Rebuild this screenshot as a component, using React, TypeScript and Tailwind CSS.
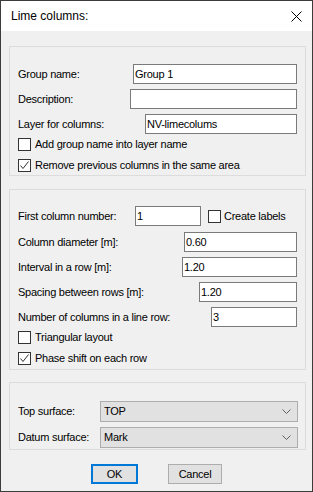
import React from "react";

const font = { fontFamily: '"Liberation Sans", Arial, sans-serif' };

function TextBox(props: { value: string; width: string }) {
  return (
    <div
      className={`ml-auto h-[20px] ${props.width} border border-[#7a7a7a] bg-white pl-[1px] flex items-center text-[11px] text-black`}
    >
      {props.value}
    </div>
  );
}

function Check(props: { checked?: boolean }) {
  return (
    <div className="w-[13px] h-[13px] border border-[#333333] bg-white flex items-center justify-center shrink-0">
      {props.checked && (
        <svg width="11" height="11" viewBox="0 0 11 11">
          <polyline
            points="1.5,5.5 4,8.5 9.5,1.5"
            fill="none"
            stroke="#333333"
            strokeWidth="1"
          />
        </svg>
      )}
    </div>
  );
}

function CheckRow(props: { label: string; checked?: boolean; className?: string }) {
  return (
    <div className={`h-[20px] flex items-center ${props.className ?? ""}`}>
      <Check checked={props.checked} />
      <span className="ml-[4px]">{props.label}</span>
    </div>
  );
}

function Select(props: { value: string }) {
  return (
    <div className="h-[21px] w-[198px] border border-[#adadad] bg-[#e1e1e1] flex items-center pl-[3px] pr-[6px]">
      <span className="flex-1">{props.value}</span>
      <svg width="9" height="6" viewBox="0 0 9 6">
        <polyline points="0.5,0.5 4.5,4.5 8.5,0.5" fill="none" stroke="#606060" strokeWidth="1" />
      </svg>
    </div>
  );
}

export default function App() {
  return (
    <div
      className="w-[313px] h-[492px] border border-[#3c3c3c] flex flex-col text-[11px] tracking-[-0.25px] text-black"
      style={font}
    >
      <div className="h-[30px] bg-white flex items-center pl-[10px] pr-[10px]">
        <span className="text-[12px] tracking-normal flex-1">Lime columns:</span>
        <svg width="11" height="11" viewBox="0 0 11 11">
          <line x1="0.5" y1="0.5" x2="10.5" y2="10.5" stroke="#000" strokeWidth="1" />
          <line x1="10.5" y1="0.5" x2="0.5" y2="10.5" stroke="#000" strokeWidth="1" />
        </svg>
      </div>

      <div className="flex-1 bg-[#f0f0f0] flex flex-col pl-[8px] pt-[15px]">
        <section className="w-[297px] h-[130px] border border-[#dcdcdc] flex flex-col pl-[8px] pr-[8px] pt-[17px]">
          <div className="h-[20px] flex items-center">
            <span>Group name:</span>
            <TextBox value="Group 1" width="w-[164px]" />
          </div>
          <div className="h-[20px] mt-[5px] flex items-center">
            <span>Description:</span>
            <TextBox value="" width="w-[167px]" />
          </div>
          <div className="h-[20px] mt-[5px] flex items-center">
            <span>Layer for columns:</span>
            <TextBox value="NV-limecolums" width="w-[152px]" />
          </div>
          <CheckRow label="Add group name into layer name" />
          <CheckRow label="Remove previous columns in the same area" checked className="mt-[1px]" />
        </section>

        <section className="w-[297px] h-[181px] mt-[13px] border border-[#dcdcdc] flex flex-col pl-[8px] pr-[8px] pt-[16px]">
          <div className="h-[20px] flex items-center">
            <span className="w-[117px]">First column number:</span>
            <div className="h-[20px] w-[66px] border border-[#7a7a7a] bg-white pl-[1px] flex items-center">
              1
            </div>
            <div className="ml-[7px]">
              <Check />
            </div>
            <span className="ml-[3px]">Create labels</span>
          </div>
          <div className="h-[20px] mt-[6px] flex items-center">
            <span>Column diameter [m]:</span>
            <TextBox value="0.60" width="w-[113px]" />
          </div>
          <div className="h-[20px] mt-[5px] flex items-center">
            <span>Interval in a row [m]:</span>
            <TextBox value="1.20" width="w-[115px]" />
          </div>
          <div className="h-[20px] mt-[5px] flex items-center">
            <span>Spacing between rows [m]:</span>
            <TextBox value="1.20" width="w-[98px]" />
          </div>
          <div className="h-[20px] mt-[5px] flex items-center">
            <span>Number of columns in a line row:</span>
            <TextBox value="3" width="w-[86px]" />
          </div>
          <CheckRow label="Triangular layout" />
          <CheckRow label="Phase shift on each row" checked className="mt-[1px]" />
        </section>

        <section className="w-[297px] h-[68px] mt-[12px] border border-[#dcdcdc] flex flex-col pl-[8px] pt-[18px]">
          <div className="flex items-center">
            <span className="w-[82px]">Top surface:</span>
            <Select value="TOP" />
          </div>
          <div className="flex items-center mt-[5px]">
            <span className="w-[82px]">Datum surface:</span>
            <Select value="Mark" />
          </div>
        </section>

        <div className="mt-[14px] flex justify-center gap-[30px] pr-[8px]">
          <button className="w-[47px] h-[20px] border-2 border-[#0078d7] bg-[#e1e1e1] flex items-center justify-center">
            OK
          </button>
          <button className="w-[54px] h-[20px] border border-[#adadad] bg-[#e1e1e1] flex items-center justify-center">
            Cancel
          </button>
        </div>
      </div>
    </div>
  );
}
